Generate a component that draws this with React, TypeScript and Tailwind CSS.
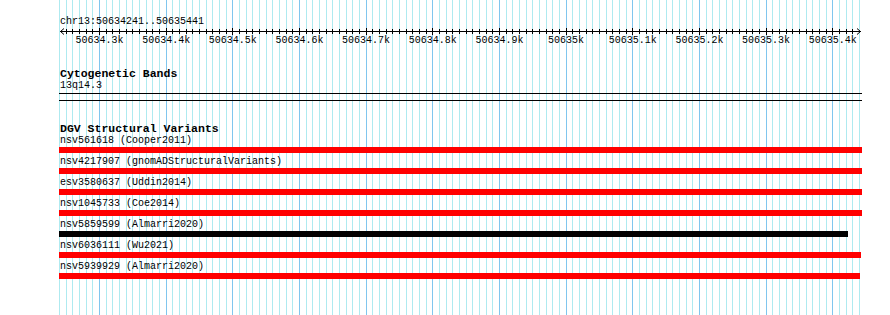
import React from "react";

const gridXs = Array.from({ length: 121 }, (_, k) => ({
  x: Math.round(59 + (k * 20) / 3),
  major: k >= 6 && (k - 6) % 10 === 0,
}));

const labels = [
  "50634.3k",
  "50634.4k",
  "50634.5k",
  "50634.6k",
  "50634.7k",
  "50634.8k",
  "50634.9k",
  "50635k",
  "50635.1k",
  "50635.2k",
  "50635.3k",
  "50635.4k",
];

const features = [
  { name: "nsv561618 (Cooper2011)", w: 803, color: "bg-[#ff0000]" },
  { name: "nsv4217907 (gnomADStructuralVariants)", w: 803, color: "bg-[#ff0000]" },
  { name: "esv3580637 (Uddin2014)", w: 803, color: "bg-[#ff0000]" },
  { name: "nsv1045733 (Coe2014)", w: 803, color: "bg-[#ff0000]" },
  { name: "nsv5859599 (Almarri2020)", w: 789, color: "bg-black" },
  { name: "nsv6036111 (Wu2021)", w: 802, color: "bg-[#ff0000]" },
  { name: "nsv5939929 (Almarri2020)", w: 801, color: "bg-[#ff0000]" },
];

function Grid() {
  return (
    <svg className="absolute left-0 top-0" width={890} height={315}>
      {gridXs.map((g, i) => (
        <line
          key={i}
          x1={g.x + 0.5}
          x2={g.x + 0.5}
          y1={0}
          y2={315}
          stroke={g.major ? "#80c6ee" : "#aeeaf0"}
          strokeWidth={1}
        />
      ))}
    </svg>
  );
}

function Ruler() {
  return (
    <svg width={803} height={7} className="block">
      <line x1={1} x2={802} y1={3.5} y2={3.5} stroke="#000" strokeWidth={1} />
      <polyline points="5,0.5 1.5,3.5 5,6.5" fill="none" stroke="#000" strokeWidth={1} />
      <polyline points="798,0.5 801.5,3.5 798,6.5" fill="none" stroke="#000" strokeWidth={1} />
      {gridXs.slice(1, 120).map((g, i) => {
        const x = g.x - 59 + 0.5;
        return (
          <line
            key={i}
            x1={x}
            x2={x}
            y1={g.major ? 0 : 1}
            y2={g.major ? 7 : 6}
            stroke="#000"
            strokeWidth={1}
          />
        );
      })}
    </svg>
  );
}

export default function App() {
  return (
    <div
      className="relative w-[890px] h-[315px] bg-white overflow-hidden text-black"
      style={{ fontFamily: '"Liberation Mono", "DejaVu Sans Mono", monospace' }}
    >
      <Grid />
      <div className="relative pl-[59px] pt-[16px] flex flex-col">
        <div className="text-[10px] leading-[12px] ml-px">chr13:50634241..50635441</div>
        <Ruler />
        <div className="flex ml-[7.17px] text-[10px] leading-[11px]">
          {labels.map((l) => (
            <div key={l} className="w-[66.667px] shrink-0 text-center whitespace-nowrap">
              {l}
            </div>
          ))}
        </div>

        <div className="mt-[21px] ml-px text-[11.5px] leading-[13px] font-bold">Cytogenetic Bands</div>
        <div className="ml-px text-[10px] leading-[12px]">13q14.3</div>
        <div className="mt-px h-px w-[803px] bg-black" />
        <div className="mt-[6px] h-px w-[803px] bg-black" />

        <div className="mt-[21px] ml-px text-[11.5px] leading-[13px] font-bold">DGV Structural Variants</div>
        <div className="flex flex-col gap-[3px]">
          {features.map((f) => (
            <div key={f.name} className="flex flex-col">
              <div className="ml-px text-[10px] leading-[12px] whitespace-nowrap">{f.name}</div>
              <div className={`h-[6px] ${f.color}`} style={{ width: f.w }} />
            </div>
          ))}
        </div>
      </div>
    </div>
  );
}
